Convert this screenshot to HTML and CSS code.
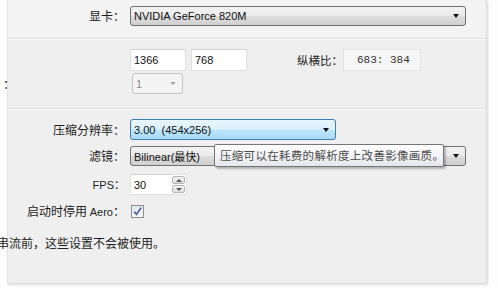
FILE: index.html
```html
<!DOCTYPE html>
<html lang="zh-CN">
<head>
    <meta charset="UTF-8">
    <title>串流设置</title>
    <link rel="stylesheet" href="styles.css">
</head>
<body>
    <div class="panel">
        <div class="top">
            <div class="row">
                <span class="label">显卡：</span>
                <div class="combo wide">
                    <span>NVIDIA GeForce 820M</span>
                    <i class="arrow"></i>
                </div>
            </div>
        </div>

        <div class="section res">
            <div class="row r1">
                <span class="label"></span>
                <input class="field" type="text" value="1366">
                <input class="field" type="text" value="768">
                <span class="label aspect-label">纵横比：</span>
                <span class="aspect">683:&nbsp;384</span>
            </div>
            <div class="row r2">
                <span class="label stub">：</span>
                <div class="combo small disabled">
                    <span>1</span>
                    <i class="arrow"></i>
                </div>
            </div>
        </div>

        <div class="section opts">
            <div class="row r3">
                <span class="label">压缩分辨率：</span>
                <div class="combo mid hot">
                    <span>3.00&nbsp;&nbsp;(454x256)</span>
                    <i class="arrow"></i>
                </div>
            </div>
            <div class="row r4">
                <span class="label">滤镜：</span>
                <div class="combo wide filter">
                    <span>Bilinear(最快)</span>
                    <i class="arrow"></i>
                    <div class="tip">压缩可以在耗费的解析度上改善影像画质。</div>
                </div>
            </div>
            <div class="row r5">
                <span class="label latin">FPS：</span>
                <div class="spin">
                    <input class="field" type="text" value="30">
                    <div class="btns">
                        <b class="up"></b>
                        <b class="down"></b>
                    </div>
                </div>
            </div>
            <div class="row r6">
                <span class="label">启动时停用 <em>Aero</em>：</span>
                <span class="check">
                    <svg width="9" height="9" viewBox="0 0 9 9"><path d="M1 4.5 L3.5 7.5 L8 0.8" fill="none" stroke="#4a5f97" stroke-width="1.6"/></svg>
                </span>
            </div>
            <p class="note">串流前，这些设置不会被使用。</p>
        </div>
    </div>
</body>
</html>
```

FILE: styles.css
```css
body {
    margin: 0;
    padding: 0;
    width: 498px;
    height: 288px;
    overflow: hidden;
    background-color: #fdfdfd;
    font-family: "Noto Sans CJK SC", "Liberation Sans", sans-serif;
    font-size: 12px;
    color: #1e1e1e;
}

.panel {
    margin-left: 7px;
    width: 478px;
    height: 283px;
    background-color: #efefef;
    border-left: 1px solid #e2e2e2;
    border-right: 1px solid #dcdcdc;
    border-bottom: 1px solid #dcdcdc;
    box-shadow: 1px 1px 2px rgba(0, 0, 0, 0.12);
}

.top {
    height: 32px;
    padding-top: 6px;
    background-color: #f3f3f3;
    border-bottom: 1px solid #dcdcdc;
    box-shadow: 0 1px 0 #fbfbfb;
}

.section {
    border-bottom: 1px solid #dcdcdc;
}

.res {
    padding-top: 10px;
    height: 59px;
    box-shadow: 0 1px 0 #fbfbfb;
}

.opts {
    border-bottom: none;
    padding-top: 10px;
}

.row {
    display: flex;
    align-items: center;
    gap: 5px;
}

.label {
    width: 117px;
    flex: none;
    text-align: right;
    white-space: nowrap;
    line-height: 16px;
}

.label em,
.latin {
    font-style: normal;
    font-family: "Liberation Sans", sans-serif;
    font-size: 11px;
}

/* combobox estilo win7 */
.combo {
    position: relative;
    height: 20px;
    box-sizing: border-box;
    border: 1px solid #707070;
    border-radius: 3px;
    background: linear-gradient(#f3f3f3 0%, #ebebeb 48%, #dddddd 52%, #d0d0d0 100%);
    display: flex;
    align-items: center;
    padding-left: 3px;
    font-family: "Liberation Sans", "Noto Sans CJK SC", sans-serif;
    font-size: 11px;
    color: #111;
}

.combo span {
    flex: 1;
    white-space: nowrap;
}

.arrow {
    width: 0;
    height: 0;
    margin-right: 6px;
    border-left: 3.5px solid transparent;
    border-right: 3.5px solid transparent;
    border-top: 4px solid #111;
}

.wide {
    width: 336px;
}

.mid {
    width: 206px;
    height: 21px;
}

.small {
    width: 51px;
    height: 21px;
}

.hot {
    border-color: #3c7fb1;
    background: linear-gradient(#eaf6fd 0%, #d9f0fc 48%, #bee6fd 52%, #a7d9f5 100%);
}

.disabled {
    border-color: #c2c5c8;
    background: #f4f4f4;
    color: #8a8a8a;
}

.disabled .arrow {
    border-top-color: #a6a6a6;
    border-left-width: 3px;
    border-right-width: 3px;
    border-top-width: 3px;
}

.field {
    box-sizing: border-box;
    width: 56px;
    height: 22px;
    margin: 0;
    padding: 0 3px;
    border: 1px solid #e0e0e0;
    border-top-color: #d2d2d2;
    background: #fff;
    font-family: "Liberation Sans", sans-serif;
    font-size: 11px;
    color: #111;
    outline: none;
}

.aspect-label {
    width: auto;
    margin-left: 45px;
    font-size: 11.5px;
}

.aspect {
    width: 78px;
    height: 22px;
    box-sizing: border-box;
    border: 1px solid #e4e4e4;
    background: #f6f6f6;
    font-family: "Liberation Mono", monospace;
    font-size: 11px;
    line-height: 20px;
    padding-left: 13px;
    margin-left: -5px;
    color: #333;
}

.r2 {
    margin-top: 2px;
}

.stub {
    width: auto;
    margin-left: -5px;
    margin-right: 112px;
}

.r4 {
    margin-top: 6px;
}

.filter .tip {
    position: absolute;
    left: 83px;
    top: -3px;
    width: 230px;
    height: 23px;
    box-sizing: border-box;
    border: 1px solid #767676;
    border-radius: 2px;
    background: linear-gradient(#ffffff, #e6e7ee);
    box-shadow: 2px 2px 2px rgba(0, 0, 0, 0.25);
    padding-left: 5px;
    font-family: "Noto Sans CJK SC", sans-serif;
    font-size: 11.5px;
    letter-spacing: 0.3px;
    line-height: 21px;
    color: #4c4c4c;
    white-space: nowrap;
}

.r5 {
    margin-top: 8px;
}

.spin {
    display: flex;
    height: 21px;
}

.spin .field {
    width: 41px;
    height: 21px;
    border-right: none;
}

.btns {
    width: 16px;
    display: flex;
    flex-direction: column;
    border: 1px solid #e0e0e0;
    border-left: none;
    background: #fff;
    padding: 1px;
    box-sizing: border-box;
    gap: 1px;
}

.btns b {
    flex: 1;
    border: 1px solid #b5b5b5;
    border-radius: 2px;
    background: linear-gradient(#f4f4f4, #dedede);
    position: relative;
}

.btns b::after {
    content: "";
    position: absolute;
    left: 3px;
    top: 2px;
    border-left: 3px solid transparent;
    border-right: 3px solid transparent;
}

.up::after {
    border-bottom: 3px solid #555;
}

.down::after {
    border-top: 3px solid #555;
}

.r6 {
    margin-top: 8px;
}

.check {
    width: 13px;
    height: 13px;
    box-sizing: border-box;
    border: 1px solid #8e8f8f;
    background: linear-gradient(#dfe7f5, #f4f7fc);
    display: flex;
    align-items: center;
    justify-content: center;
    margin-left: 1px;
}

.note {
    margin: 16px 0 0 -11px;
    line-height: 14px;
    white-space: nowrap;
}
```
